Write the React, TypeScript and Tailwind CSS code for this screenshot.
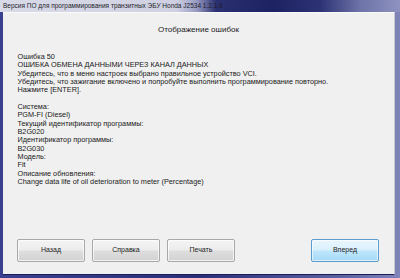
import React from 'react'

const font = { fontFamily: '"Liberation Sans", Arial, sans-serif' }

const lines = [
  'Ошибка 50',
  'ОШИБКА ОБМЕНА ДАННЫМИ ЧЕРЕЗ КАНАЛ ДАННЫХ',
  'Убедитесь, что в меню настроек выбрано правильное устройство VCI.',
  'Убедитесь, что зажигание включено и попробуйте выполнить программирование повторно.',
  'Нажмите [ENTER].',
  '',
  'Система:',
  'PGM-FI (Diesel)',
  'Текущий идентификатор программы:',
  'B2G020',
  'Идентификатор программы:',
  'B2G030',
  'Модель:',
  'Fit',
  'Описание обновления:',
  'Change data life of oil deterioration to meter (Percentage)',
]

function WinButton({ label, primary }: { label: string; primary?: boolean }) {
  return (
    <div
      className={
        primary
          ? 'w-[68px] h-[23px] flex items-center justify-center rounded-[2px] border border-[#5a9ccf] bg-[linear-gradient(180deg,#eaf6fd_0%,#d9f0fc_48%,#bee6fd_52%,#a7d9f5_100%)] text-[7px] text-[#1a1a1a] shadow-[inset_0_0_0_1px_rgba(255,255,255,0.6)]'
          : 'w-[68px] h-[23px] flex items-center justify-center rounded-[2px] border border-[#a8a8a8] bg-[linear-gradient(180deg,#f4f4f4_0%,#ececec_48%,#dedede_52%,#d2d2d2_100%)] text-[7px] text-[#1a1a1a] shadow-[inset_0_0_0_1px_rgba(255,255,255,0.7)]'
      }
    >
      {label}
    </div>
  )
}

export default function App() {
  return (
    <div
      className="w-[400px] h-[278px] flex flex-col bg-[linear-gradient(90deg,#3a4090_0%,#2a2f78_50%,#5c62a0_85%,#7f84b8_100%)] overflow-hidden"
      style={font}
    >
      <div className="h-[12px] shrink-0 flex items-center pl-[3px] bg-[linear-gradient(90deg,#d9dae8_0%,#cfd1e2_44%,#9a9dc4_49%,#2b3070_54%,#1d2262_68%,#2c3274_80%,#6e73a8_90%,#8d92c0_100%)]">
        <span className="text-[6.5px] leading-none text-[#1e1e2a] whitespace-nowrap">
          Версия ПО для программирования транзитных ЭБУ Honda J2534 1.2.1.6
        </span>
      </div>

      <div className="flex-1 ml-[3px] mr-[5px] mb-[3px] flex flex-col bg-[#f0f0f0] border-t border-t-[#fafafa] border-r border-r-[#c8c8d0] border-b border-b-[#1a1f5c]">
        <div className="pt-[12px] text-center text-[8px] leading-[10px] text-[#1a1a1a]">
          Отображение ошибок
        </div>

        <div className="mt-[18px] pl-[14.5px] text-[7.3px] leading-[8.33px] text-[#1a1a1a]">
          {lines.map((l, i) => (
            <div key={i} className="h-[8.33px] whitespace-nowrap">
              {l}
            </div>
          ))}
        </div>

        <div className="mt-auto pb-[12px] pl-[14px] pr-[15px] flex items-center justify-between">
          <div className="flex gap-[7px]">
            <WinButton label="Назад" />
            <WinButton label="Справка" />
            <WinButton label="Печать" />
          </div>
          <WinButton label="Вперед" primary />
        </div>
      </div>
    </div>
  )
}
